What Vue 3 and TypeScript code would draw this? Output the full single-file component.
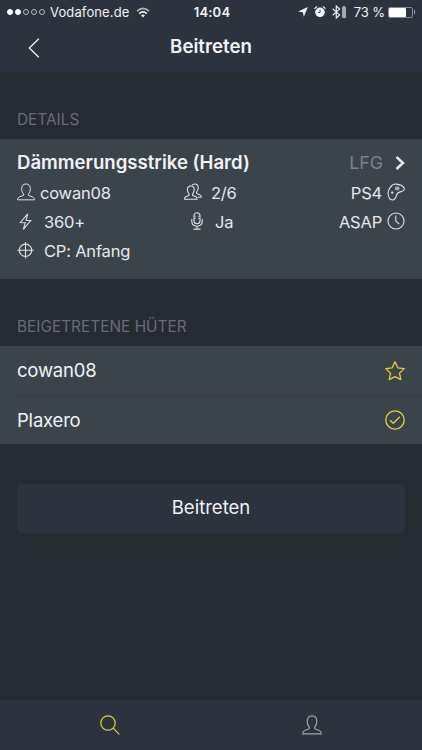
<script setup lang="ts">
interface Guardian {
  name: string
  role: 'leader' | 'member'
}

const signalDots: boolean[] = [true, true, false, false, false]
const batteryLevel = 73
const guardians: Guardian[] = [
  { name: 'cowan08', role: 'leader' },
  { name: 'Plaxero', role: 'member' },
]
</script>

<template>
  <div class="screen">
    <header class="top">
      <div class="status">
        <div class="carrier">
          <span class="dots"><i v-for="(on, i) in signalDots" :key="i" :class="{ on }"></i></span>
          <span class="carrier-name">Vodafone.de</span>
          <svg class="wifi" width="14" height="11" viewBox="0 0 14 11" fill="none" stroke="#f2f3f5" stroke-width="1.7">
            <path d="M1 4.2Q7-1.4 13 4.2" stroke="#aeb2b8" />
            <path d="M3.2 6.6Q7 3.1 10.8 6.6" />
            <path d="M7 10.4L5 8.3Q7 6.7 9 8.3Z" fill="#f2f3f5" stroke="none" />
          </svg>
        </div>
        <span class="time">14:04</span>
        <div class="indicators">
          <svg class="loc" width="10" height="10" viewBox="0 0 10 10"><path d="M9.9.1L5.8 9.8L4.9 5.2L.1 4.6Z" fill="#f4f5f7" /></svg>
          <svg class="alarm" width="12" height="12" viewBox="0 0 12 12" fill="none" stroke="#f4f5f7" stroke-linecap="round">
            <circle cx="6" cy="6.3" r="4.8" fill="#f4f5f7" stroke="none" />
            <path d="M.8 2.6Q1.4 1.2 2.8.9M9.2.9Q10.6 1.2 11.2 2.6" stroke-width="1.1" />
            <path d="M6.1 4V6.5H4.4" stroke="#2c333f" stroke-width=".9" />
          </svg>
          <svg class="bt" width="9" height="14" viewBox="0 0 9 14" fill="none" stroke="#e6e8eb" stroke-width="1.2"><path d="M.7 3.8L7.6 9.9L4.3 13V1L7.6 4.1L.7 10.2" /></svg>
          <svg class="btbat" width="4" height="12" viewBox="0 0 4 12"><path d="M1.2.5H2.8V1.5H3.6V11.5H.4V1.5H1.2Z" fill="#a2a7ad" stroke="#c2c6cb" stroke-width=".7" /></svg>
          <span class="percent">{{ batteryLevel }} %</span>
          <span class="battery"><span class="fill" :style="{ width: batteryLevel + '%' }"></span></span>
          <span class="cap"></span>
        </div>
      </div>
      <nav class="nav">
        <svg class="back" width="12" height="20" viewBox="0 0 12 20" fill="none" stroke="#eef0f2" stroke-width="1.3"><path d="M10.8.8L1.3 10L10.8 19.2" /></svg>
        <h1>Beitreten</h1>
      </nav>
    </header>

    <h2>DETAILS</h2>
    <section class="card">
      <div class="title-row">
        <span class="title">Dämmerungsstrike (Hard)</span>
        <span class="tag">LFG</span>
        <svg width="10" height="14" viewBox="0 0 10 14" fill="none" stroke="#e5e7ea" stroke-width="2.5"><path d="M1.5 1L8 7L1.5 13" /></svg>
      </div>
      <div class="info">
        <div class="cell">
          <svg class="raised" width="18" height="18" viewBox="0 0 20 20"><path d="M7.3 12.2C5.8 10.8 5.2 8.8 5.2 6.3C5.2 3 7 1.1 10 1.1S14.8 3 14.8 6.3C14.8 8.8 14.2 10.8 12.7 12.2V13.7L17.4 15.5C18.9 16.1 19.3 17.2 19.3 18.7H.7C.7 17.2 1.1 16.1 2.6 15.5L7.3 13.7Z" /></svg>
          <span>cowan08</span>
        </div>
        <div class="cell">
          <svg class="raised" width="18" height="18" viewBox="0 0 18 18"><path d="M5 10.8C3.9 9.7 3.4 8.2 3.4 6.6C3.4 4.2 4.6 3 6.8 3S10.2 4.2 10.2 6.6C10.2 8.2 9.7 9.7 8.6 10.8V12.4L12 13.8C13 14.2 13.1 15 13.1 16.3H.6C.6 15 .7 14.2 1.7 13.8L5 12.4Z" /><path d="M8 2.3C8.5 1.4 9.4 1 10.7 1C13 1 14.2 2.3 14.2 4.8C14.2 6.4 13.7 7.8 12.6 8.9V10.5L16 12C17 12.4 17.3 13 17.3 14.2H14" /></svg>
          <span class="wide">2/6</span>
        </div>
        <div class="cell end">
          <span>PS4</span>
          <svg class="raised" width="18" height="18" viewBox="0 0 18 18"><path d="M3.2 4.4C4.6 2.2 7 .9 9.3 1.1C12 1.3 16 2.9 17.2 5C17.8 7 16 8.3 14 8.6C11.4 9 10.3 10 9.6 12C8.8 14.6 7.8 17 5.6 17C2.6 17 1.2 13.4 1.1 10C1 7.6 2 6.2 3.2 4.4Z" /><path d="M8.6 4.1H11.8V6.7H8.6ZM10.2 3.5V7.3M8 5.4H12.4" stroke-width=".6" /><circle cx="5.2" cy="9.6" r="1.2" fill="#dfe2e5" stroke="none" /></svg>
        </div>
        <div class="cell">
          <svg width="18" height="18" viewBox="0 0 18 18"><path d="M10.7.8L3.4 9.5L8.3 9.7L6.3 16.4L13.7 7.5L9.1 7.3Z" /></svg>
          <span class="wide">360+</span>
        </div>
        <div class="cell mic">
          <svg class="raised" width="18" height="18" viewBox="0 0 18 18"><rect x="6" y=".8" width="6" height="11" rx="3" /><path d="M6.2 4.3H8M10 4.3H11.8M6.2 6.5H8M10 6.5H11.8" stroke-width=".6" /><path d="M3.8 7V9.3C3.8 12.6 6 14.2 9 14.2S14.2 12.6 14.2 9.3V7M9 14.2V17.1M5.5 17.1H12.5" /></svg>
          <span class="wide">Ja</span>
        </div>
        <div class="cell end">
          <span>ASAP</span>
          <svg class="raised" width="18" height="18" viewBox="0 0 18 18"><circle cx="9" cy="9" r="8" /><path d="M8.8 3.4V9.1L12.2 12" /></svg>
        </div>
        <div class="cell">
          <svg width="18" height="18" viewBox="0 0 18 18"><circle cx="8.5" cy="8.3" r="6.2" /><path d="M8.5.2V16.4M.3 8.3H16.8" /></svg>
          <span class="wide">CP: Anfang</span>
        </div>
      </div>
    </section>

    <h2>BEIGETRETENE HÜTER</h2>
    <ul class="guardians">
      <li v-for="g in guardians" :key="g.name">
        <span>{{ g.name }}</span>
        <svg v-if="g.role === 'leader'" width="20" height="20" viewBox="0 0 20 20" stroke-linejoin="round"><path d="M10 .9L12.8 6.8L19.2 7.6L14.5 12.1L15.8 18.6L10 15.6L4.2 18.6L5.5 12.1L.8 7.6L7.2 6.8Z" /></svg>
        <svg v-else width="20" height="20" viewBox="0 0 20 20"><circle cx="10" cy="10" r="9.2" /><path d="M5 10.2L8.3 13.3L14.8 6.7" /></svg>
      </li>
    </ul>

    <button class="join" type="button">Beitreten</button>

    <footer class="tabs">
      <div class="tab active">
        <svg width="20" height="20" viewBox="0 0 20 20"><circle cx="8" cy="8" r="7.2" /><path d="M13.2 13.2L19.3 19.3" /></svg>
      </div>
      <div class="tab">
        <svg width="20" height="20" viewBox="0 0 20 20"><path d="M7.3 12.2C5.8 10.8 5.2 8.8 5.2 6.3C5.2 3 7 .8 10 .8S14.8 3 14.8 6.3C14.8 8.8 14.2 10.8 12.7 12.2V13.7L17.4 15.5C18.9 16.1 19.3 17.2 19.3 18.9H.7C.7 17.2 1.1 16.1 2.6 15.5L7.3 13.7Z" /></svg>
      </div>
    </footer>
  </div>
</template>

<style>
body {
  background: #262a31;
}
</style>

<style scoped>
* {
  box-sizing: border-box;
}
.screen {
  display: flex;
  flex-direction: column;
  width: 422px;
  height: 750px;
  overflow: hidden;
  background: #262a31;
  color: #f0f2f4;
  font-family: Inter, "Liberation Sans", sans-serif;
}
svg {
  display: block;
  flex: none;
}
.top {
  height: 72px;
  background: #2c333f;
}
.status {
  display: grid;
  grid-template-columns: 1fr auto 1fr;
  align-items: center;
  height: 24px;
  padding: 0 7px;
  font-size: 13px;
}
.carrier,
.indicators,
.dots {
  display: flex;
  align-items: center;
}
.dots {
  gap: 2px;
}
.dots i {
  width: 6px;
  height: 6px;
  border: 1px solid #b5b8bd;
  border-radius: 50%;
}
.dots i.on {
  border-color: #fff;
  background: #fff;
}
.carrier-name {
  margin-left: 5px;
  letter-spacing: 0.12px;
}
.wifi {
  margin-left: 7px;
}
.time {
  padding-left: 2px;
  font-weight: 600;
  letter-spacing: 0.2px;
}
.indicators {
  justify-content: flex-end;
}
.alarm {
  margin-left: 6px;
}
.bt {
  margin-left: 6px;
}
.btbat {
  margin-left: 1px;
}
.percent {
  margin-left: 8px;
  letter-spacing: -0.1px;
  white-space: nowrap;
}
.battery {
  width: 25px;
  height: 11px;
  margin-left: 3px;
  border: 1px solid #858a92;
  border-radius: 2px;
}
.fill {
  display: block;
  height: 100%;
  border-radius: 1px;
  background: #fff;
}
.cap {
  width: 1px;
  height: 4px;
  margin-left: 1px;
  background: #9a9ea5;
}
.nav {
  display: grid;
  grid-template-columns: 40px 1fr 40px;
  align-items: center;
  height: 47px;
}
.back {
  justify-self: end;
}
h1 {
  margin: 0;
  padding-bottom: 2px;
  font-size: 18.7px;
  font-weight: 600;
  text-align: center;
}
h2 {
  display: flex;
  align-items: flex-end;
  height: 67px;
  margin: 0;
  padding: 0 17px 10px;
  color: #686d75;
  font-size: 15.4px;
  font-weight: 400;
  line-height: 18px;
}
.card {
  height: 140px;
  padding: 7px 17px 0;
  background: #3c444b;
}
.title-row {
  display: flex;
  align-items: center;
  height: 32px;
}
.title {
  flex: 1;
  font-size: 18.6px;
  font-weight: 600;
}
.tag {
  margin-right: 12px;
  color: #7d8288;
  font-size: 17.8px;
}
.title-row svg {
  margin-top: 1px;
}
.info {
  display: grid;
  grid-template-columns: 167px 1fr 1fr;
  grid-auto-rows: 29.3px;
  font-size: 16.5px;
  letter-spacing: -0.2px;
  color: #e6e8eb;
}
.cell {
  display: flex;
  align-items: center;
  gap: 5px;
  white-space: nowrap;
}
.cell.end {
  justify-content: flex-end;
}
.wide {
  margin-left: 4px;
}
.mic {
  padding-left: 4px;
}
.cell svg {
  fill: none;
  stroke: #dfe2e5;
  stroke-width: 1.1;
}
.cell .raised {
  margin-top: -2px;
}
.guardians {
  margin: 0;
  padding: 0;
  list-style: none;
  background: #3c444b;
}
.guardians li {
  display: flex;
  align-items: center;
  justify-content: space-between;
  height: 49px;
  margin-left: 17px;
  padding-right: 17px;
  font-size: 18.5px;
  letter-spacing: -0.2px;
}
.guardians li span {
  padding-bottom: 1px;
}
.guardians li + li {
  border-top: 1px solid #343b42;
}
.guardians svg {
  fill: none;
  stroke: #e5cf3c;
  stroke-width: 1.3;
}
.join {
  height: 49px;
  margin: 40px 17px 0;
  padding: 0 0 3px;
  border: 0;
  border-radius: 5px;
  background: #2c333f;
  color: #f0f2f4;
  font: 18.5px Inter, "Liberation Sans", sans-serif;
}
.tabs {
  display: grid;
  grid-template-columns: 219px 185px;
  height: 50px;
  margin-top: auto;
  background: #2c333f;
}
.tab {
  display: grid;
  place-items: center;
}
.tab svg {
  fill: none;
  stroke: #a0a4aa;
  stroke-width: 1.2;
}
.tab.active svg {
  stroke: #e5cf3c;
}
</style>
